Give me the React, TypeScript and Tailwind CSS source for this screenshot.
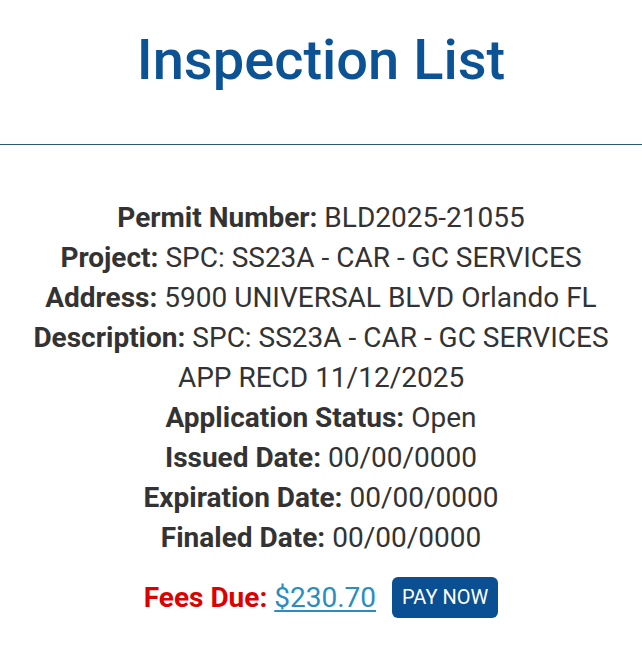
import React from 'react';

const rows: { label: string; value: string }[] = [
  { label: 'Permit Number:', value: 'BLD2025-21055' },
  { label: 'Project:', value: 'SPC: SS23A - CAR - GC SERVICES' },
  { label: 'Address:', value: '5900 UNIVERSAL BLVD Orlando FL' },
  { label: 'Description:', value: 'SPC: SS23A - CAR - GC SERVICES APP RECD 11/12/2025' },
  { label: 'Application Status:', value: 'Open' },
  { label: 'Issued Date:', value: '00/00/0000' },
  { label: 'Expiration Date:', value: '00/00/0000' },
  { label: 'Finaled Date:', value: '00/00/0000' },
];

const App: React.FC = () => {
  return (
    <div className="min-h-screen bg-white font-['Roboto',sans-serif]">
      {/* Header */}
      <header className="pt-[24px] pb-[48px] border-b border-[#2d5670] text-center">
        <h1 className="text-[56px] leading-[72px] font-medium text-[#0b5394]">Inspection List</h1>
      </header>

      {/* Permit details */}
      <section className="px-4 pt-[53px] text-center text-[28px] leading-[40px] text-[#333333]">
        {rows.map((row) => (
          <p key={row.label}>
            <span className="font-bold">{row.label}</span> {row.value}
          </p>
        ))}

        <div className="mt-[19px] flex items-center justify-center gap-4">
          <p>
            <span className="font-bold text-[#dd0000]">Fees Due:</span>{' '}
            <a href="#" className="text-[#2a8dbf] underline underline-offset-[3px]">$230.70</a>
          </p>
          <button className="rounded-[6px] bg-[#0b4f93] px-[10px] py-[6px] text-[20px] leading-[29px] text-white">
            PAY NOW
          </button>
        </div>
      </section>
    </div>
  );
};

export default App;
